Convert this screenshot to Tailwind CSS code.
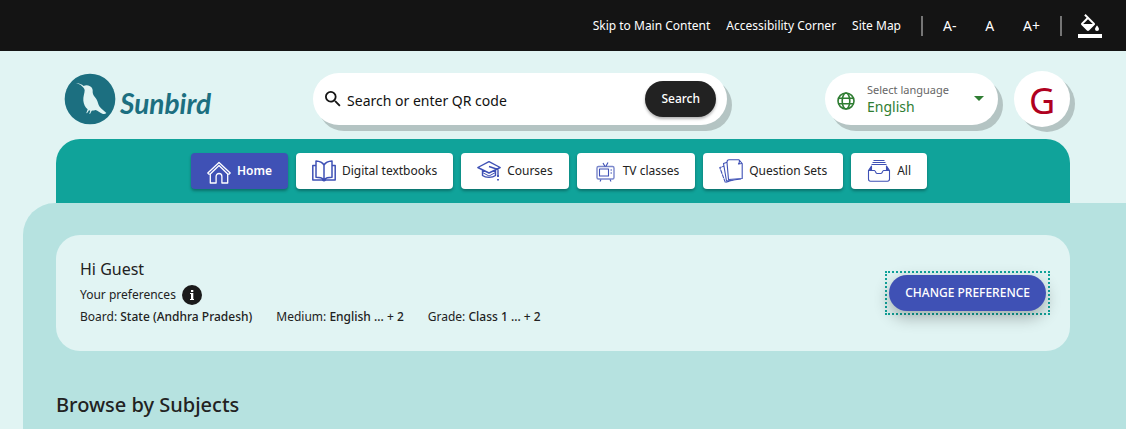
<!DOCTYPE html>
<html lang="en">
<head>
  <meta charset="UTF-8">
  <meta name="viewport" content="width=device-width, initial-scale=1.0">
  <title>Sunbird</title>
  <script src="https://cdn.jsdelivr.net/npm/@tailwindcss/browser@4"></script>
</head>
<body class="min-h-screen flex flex-col overflow-x-hidden bg-[#e1f4f3] font-['Noto_Sans',sans-serif] text-[#222]">

  <!-- Accessibility bar -->
  <div class="h-[51px] shrink-0 flex items-center justify-end bg-[#141414] pr-6 text-xs text-white">
    <nav class="flex gap-4" aria-label="Accessibility">
      <a href="#main">Skip to Main Content</a>
      <a href="#accessibility">Accessibility Corner</a>
      <a href="#sitemap">Site Map</a>
    </nav>
    <span class="ml-5 h-5 w-0.5 bg-[#757575]"></span>
    <div class="flex w-[137px] justify-between px-5 text-sm">
      <button type="button" aria-label="Decrease font size">A-</button>
      <button type="button" aria-label="Default font size">A</button>
      <button type="button" aria-label="Increase font size">A+</button>
    </div>
    <span class="h-5 w-0.5 bg-[#757575]"></span>
    <button type="button" class="ml-4" aria-label="Change theme">
      <svg class="size-6" viewBox="0 0 24 24" fill="#fff">
        <path d="M16.56 8.94 7.62 0 6.21 1.41l2.38 2.38-5.15 5.15a1.49 1.49 0 0 0 0 2.12l5.5 5.5c.29.29.68.44 1.06.44s.77-.15 1.06-.44l5.5-5.5c.59-.58.59-1.53 0-2.12zM5.21 10 10 5.21 14.79 10zM19 11.5s-2 2.17-2 3.5a2 2 0 0 0 4 0c0-1.33-2-3.5-2-3.5zM0 20h24v4H0z"/>
      </svg>
    </button>
  </div>

  <!-- Header -->
  <header class="h-[88px] shrink-0 flex items-center px-14 pb-2 pt-4">
    <a href="#home" class="ml-2 flex shrink-0 items-center gap-1 text-[#1c6f80]">
      <svg class="size-[52px]" viewBox="44 39 152 156" aria-hidden="true">
        <circle cx="120" cy="117" r="76" fill="#1c6f80"/>
        <path fill="#e1f4f3" d="M78 69c9 1 17 4 23 9 5-3 13-3 19 1 7 4 9 10 8 18 0 8 6 13 11 20 5 8 5 17 10 23 6 7 14 12 20 19-3 4-8 4-12 2-8-3-13-9-20-11-3 1-8 2-12 2l-5 10-2-1 3-9-4-1-6 9-2-1 4-11c-7-6-12-15-13-26-1-12 4-22 4-31 0-6-5-10-12-16-5-3-10-5-14-6z"/>
      </svg>
      <span class="pt-2 font-['Lato',cursive] text-[28px] font-bold italic">Sunbird</span>
    </a>

    <form class="ml-[102px] flex h-[52px] min-w-0 flex-1 items-center rounded-full bg-white pl-3 pr-[11px] shadow-[5px_6px_0_#b4c4c3]" role="search">
      <svg class="size-4 shrink-0" viewBox="3 3 18 18" fill="#141414" aria-hidden="true">
        <path d="M15.5 14h-.79l-.28-.27A6.47 6.47 0 0 0 16 9.5 6.5 6.5 0 1 0 9.5 16c1.61 0 3.09-.59 4.23-1.57l.27.28v.79l5 4.99L20.49 19zm-6 0C7.01 14 5 11.99 5 9.5S7.01 5 9.5 5 14 7.01 14 9.5 11.99 14 9.5 14z"/>
      </svg>
      <input type="text" class="ml-1.5 min-w-0 flex-1 bg-transparent pt-1 text-sm text-[#111] outline-none placeholder:text-[#111]" placeholder="Search or enter QR code" aria-label="Search or enter QR code">
      <button type="submit" class="h-9 shrink-0 rounded-full bg-[#222] px-4 text-xs font-medium text-white shadow-[0_2px_3px_rgba(0,0,0,0.3)]">Search</button>
    </form>

    <div class="ml-[98px] flex h-[52px] w-[173px] shrink-0 items-center rounded-full bg-white pl-3 pr-3.5 text-[#2f7d32] shadow-[5px_6px_0_#b4c4c3]">
      <svg class="mt-1 size-[18px] shrink-0" viewBox="0 0 18 18" fill="none" stroke="currentColor" stroke-width="1.6" aria-hidden="true">
        <circle cx="9" cy="9" r="8"/>
        <ellipse cx="9" cy="9" rx="3.8" ry="8"/>
        <path d="M1.5 6.200h15M1.5 11.800h15"/>
      </svg>
      <div class="relative ml-3 flex-1">
        <label for="language" class="block text-[11px] leading-4 text-[#666]">Select language</label>
        <select id="language" class="block w-full appearance-none bg-transparent text-sm leading-[18px] outline-none">
          <option>English</option>
          <option>Hindi</option>
        </select>
        <svg class="pointer-events-none absolute right-0 top-3.5 h-[5px] w-2.5" viewBox="0 0 10 5" fill="currentColor" aria-hidden="true"><path d="M0 0h10L5 5z"/></svg>
      </div>
    </div>

    <button type="button" class="ml-4 size-14 shrink-0 rounded-full bg-white pt-1 text-4xl text-[#b00020] shadow-[5px_5px_0_#b4c4c3]" aria-label="Profile">G</button>
  </header>

  <!-- Tabs -->
  <nav class="mx-14 flex h-16 shrink-0 items-center justify-center gap-2 rounded-t-3xl bg-[#10a39a] pr-2 text-xs" aria-label="Categories">
    <button type="button" class="flex h-9 items-center gap-1.5 rounded bg-[#3f51b5] px-4 font-semibold text-white shadow-[0_2px_3px_rgba(0,0,0,0.3)]">
      <svg class="mt-1 size-6" viewBox="0 0 24 24" fill="none" stroke="#fff" stroke-width="1.3" stroke-linejoin="round" aria-hidden="true">
        <path d="M.8 12 12 1.5 23.200 12l-1.300 1.200h-1.200V22h-5.800v-6.500c0-4-5.800-4-5.800 0V22H3.300v-8.800H2zM3.300 13 12 4.500l8.700 8.500"/>
      </svg>
      Home
    </button>
    <button type="button" class="flex h-9 items-center gap-1.5 rounded bg-white px-4 shadow-[0_2px_3px_rgba(0,0,0,0.3)]">
      <svg class="size-6" viewBox="0 0 24 24" fill="none" stroke="#3f51b5" stroke-width="1.5" stroke-linejoin="round" aria-hidden="true">
        <path d="M12 6C10.500 3.500 7.500 2.200 4 2v16.200c3.500 0 6 .5 8 2.300 2-1.800 4.500-2.300 8-2.300V2c-3.500.2-6.500 1.500-8 4zv14.500M4 6.500H.8V21h9.500l1.700.8 1.700-.8h9.500V6.500H20"/>
      </svg>
      Digital textbooks
    </button>
    <button type="button" class="flex h-9 items-center gap-1.5 rounded bg-white px-4 shadow-[0_2px_3px_rgba(0,0,0,0.3)]">
      <svg class="size-6" viewBox="0 0 24 24" fill="none" stroke="#3f51b5" stroke-width="1.4" stroke-linejoin="round" aria-hidden="true">
        <path d="M.8 8.500 12 2.700l11.200 5.800L12 14zM5.500 11v5.500c3 2.500 10 2.500 13 0V11M12 7.500l9 3v6"/>
        <path d="M5.500 13.500 12 17l6.500-3.500" stroke-width="1"/>
        <path d="M21 16v2M21 20v1.500" stroke-width="1.8"/>
      </svg>
      Courses
    </button>
    <button type="button" class="flex h-9 items-center gap-1.5 rounded bg-white px-4 shadow-[0_2px_3px_rgba(0,0,0,0.3)]">
      <svg class="size-6" viewBox="0 0 24 24" fill="none" stroke="#3f51b5" stroke-width="1.1" stroke-linejoin="round" aria-hidden="true">
        <rect x="4" y="7.500" width="17" height="12.500" rx="1.5" stroke="#7986cb" stroke-width="1.4"/>
        <rect x="6.500" y="10" width="9" height="7"/>
        <path d="m10 4 2 3.500M15 3.500l-2.200 4M8 20.500l-1 2M17 20.500l1 2M17.500 11H19M17.500 14H19"/>
      </svg>
      TV classes
    </button>
    <button type="button" class="flex h-9 items-center gap-1.5 rounded bg-white px-4 shadow-[0_2px_3px_rgba(0,0,0,0.3)]">
      <svg class="size-6" viewBox="0 0 24 24" fill="#fff" stroke="#3f51b5" stroke-width="1.1" stroke-linejoin="round" aria-hidden="true">
        <path d="M7 6.500.8 8.500l5.500 15L14 21z" stroke-dasharray="4 .6"/>
        <path d="M9 3 4.500 4.500 7.500 22l14-2z"/>
        <path d="M10 .8h10l3.200 3.700V19.500L9.500 20.500 8 3.500c0-1.500.5-2.700 2-2.700zM20 .8c1 1 0 3.700-.5 4.200 1-.6 2.700-.5 3.700-.5"/>
      </svg>
      Question Sets
    </button>
    <button type="button" class="flex h-9 items-center gap-1.5 rounded bg-white px-4 shadow-[0_2px_3px_rgba(0,0,0,0.3)]">
      <svg class="size-6" viewBox="0 0 24 24" fill="none" stroke="#3f51b5" stroke-width="1.1" stroke-linejoin="round" aria-hidden="true">
        <path d="M6.500 1.500h11M5.500 3.500h13M4.500 5.500h15" stroke-width="1.2"/>
        <path d="M1.500 11.500h6c1 0 1 3 2.500 3h4c1.500 0 1.500-3 2.500-3h6V20c0 1.500-.8 2.200-2 2.200h-17c-1.200 0-2-.7-2-2.200z"/>
        <path d="M4.500 7 1.500 11.500h3zM19.500 7l3 4.500h-3z" fill="#3f51b5"/>
      </svg>
      All
    </button>
  </nav>

  <!-- Main -->
  <main id="main" class="ml-[23px] flex-1 rounded-tl-[32px] bg-[#b6e2e0] pl-[33px] pr-14 pt-8">
    <section class="flex h-[116px] items-center justify-between rounded-3xl bg-[#e1f4f3] pl-6 pr-5">
      <div class="pb-1 text-xs">
        <h1 class="text-base leading-6">Hi Guest</h1>
        <div class="mt-1 flex h-5 items-center gap-1.5">
          Your preferences
          <button type="button" aria-label="About your preferences">
            <svg class="size-5" viewBox="0 0 20 20"><circle cx="10" cy="10" r="10" fill="#1a1a1a"/><path d="M8 8h3.300v6H12v1H8v-1h1V9H8zM9 5h2.300v2H9z" fill="#fff"/></svg>
          </button>
        </div>
        <div class="mt-1 flex gap-6 leading-4">
          <p>Board: <span class="font-medium">State (Andhra Pradesh)</span></p>
          <p>Medium: <span class="font-medium">English ... + 2</span></p>
          <p>Grade: <span class="font-medium">Class 1 ... + 2</span></p>
        </div>
      </div>
      <div class="border-2 border-dotted border-[#10a39a] p-0.5">
        <button type="button" class="h-9 rounded-full bg-[#3f51b5] px-4 text-xs font-medium text-white shadow-[0_6px_16px_rgba(0,0,0,0.3)]">CHANGE PREFERENCE</button>
      </div>
    </section>

    <h2 class="mt-10 text-xl font-medium">Browse by Subjects</h2>
  </main>

</body>
</html>
